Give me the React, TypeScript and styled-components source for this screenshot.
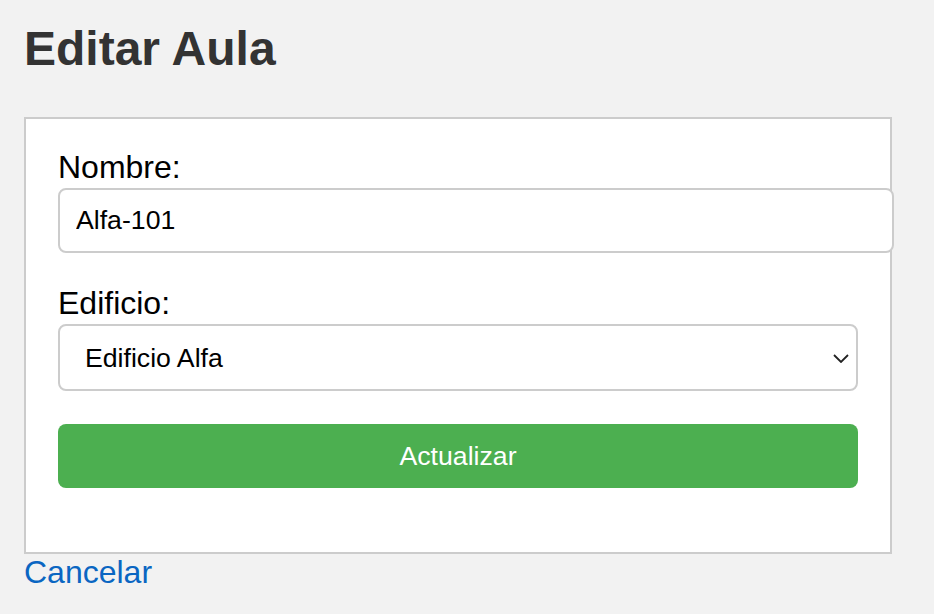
import React from 'react';
import styled, { createGlobalStyle } from 'styled-components';

const GlobalStyle = createGlobalStyle`
  html, body {
    margin: 0;
    padding: 0;
    background: #f2f2f2;
    font-family: 'Liberation Sans', Arial, Helvetica, sans-serif;
  }
`;

const Page = styled.div`
  padding: 21px 24px 0;
`;

const Title = styled.h1`
  margin: 0 0 41px;
  font-size: 48px;
  font-weight: 700;
  line-height: normal;
  color: #333;
`;

const Card = styled.form`
  width: 868px;
  box-sizing: border-box;
  background: #fff;
  border: 2px solid #ccc;
  padding: 30px 32px 64px;
  display: flex;
  flex-direction: column;
  gap: 32px;
`;

const Field = styled.div`
  display: flex;
  flex-direction: column;
`;

const Label = styled.label`
  display: block;
  margin-bottom: 2px;
  font-size: 32px;
  line-height: normal;
  color: #000;
`;

const TextInput = styled.input`
  box-sizing: content-box;
  width: 100%;
  height: 29px;
  padding: 16px;
  margin: 0;
  border: 2px solid #ccc;
  border-radius: 8px;
  font-family: inherit;
  font-size: 26.67px;
  color: #000;
  background: #fff;
  outline: none;
`;

const SelectWrap = styled.div`
  position: relative;
  width: 100%;
`;

const Select = styled.select`
  appearance: none;
  -webkit-appearance: none;
  box-sizing: border-box;
  width: 100%;
  height: 67px;
  margin: 0;
  padding: 0 48px 0 25px;
  border: 2px solid #ccc;
  border-radius: 8px;
  background: #fff;
  font-family: inherit;
  font-size: 26.67px;
  color: #000;
  outline: none;
`;

const Chevron = styled.svg`
  position: absolute;
  right: 9px;
  top: 50%;
  width: 16px;
  height: 9px;
  margin-top: -4px;
  pointer-events: none;
`;

const SubmitButton = styled.button`
  width: 100%;
  height: 64px;
  margin-top: 1px;
  border: none;
  border-radius: 8px;
  background: #4caf50;
  color: #fff;
  font-family: inherit;
  font-size: 26.67px;
  cursor: pointer;
`;

const CancelLink = styled.a`
  display: inline-block;
  font-size: 32px;
  line-height: normal;
  color: #0a66c2;
  text-decoration: none;
  cursor: pointer;
`;

export default function App() {
  return (
    <>
      <GlobalStyle />
      <Page>
        <Title>Editar Aula</Title>
        <Card onSubmit={(e) => e.preventDefault()}>
          <Field>
            <Label htmlFor="nombre">Nombre:</Label>
            <TextInput id="nombre" type="text" defaultValue="Alfa-101" />
          </Field>
          <Field>
            <Label htmlFor="edificio">Edificio:</Label>
            <SelectWrap>
              <Select id="edificio" defaultValue="alfa">
                <option value="alfa">Edificio Alfa</option>
                <option value="beta">Edificio Beta</option>
              </Select>
              <Chevron viewBox="0 0 16 9" fill="none">
                <path d="M1 1l7 7 7-7" stroke="#222" strokeWidth="1.8" />
              </Chevron>
            </SelectWrap>
          </Field>
          <SubmitButton type="submit">Actualizar</SubmitButton>
        </Card>
        <CancelLink href="#">Cancelar</CancelLink>
      </Page>
    </>
  );
}
